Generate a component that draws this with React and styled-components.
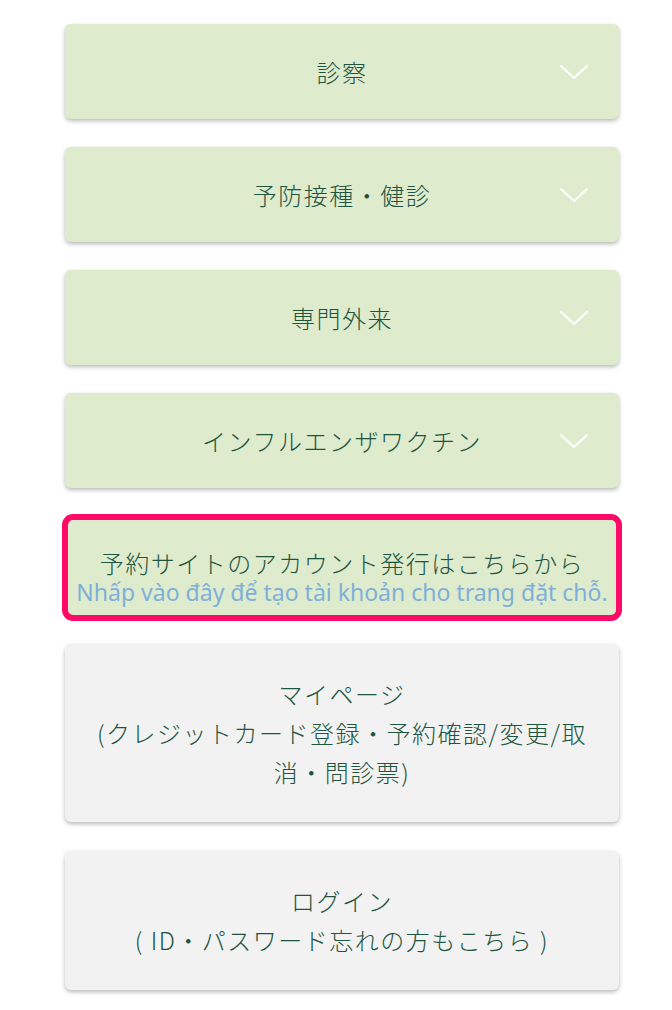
import React from 'react';
import styled, { createGlobalStyle } from 'styled-components';

const GlobalStyle = createGlobalStyle`
  html, body {
    margin: 0;
    padding: 0;
    background: #fff;
  }
  body {
    font-family: 'Noto Sans', 'Noto Sans CJK JP', sans-serif;
  }
`;

const MenuList = styled.div`
  width: 554px;
  padding: 24px 0 20px 65px;
  display: flex;
  flex-direction: column;
`;

const Card = styled.div`
  position: relative;
  box-sizing: border-box;
  background: ${p => (p.$gray ? '#f2f2f2' : '#deebcd')};
  border-radius: 6px;
  box-shadow: 0 2px 4px rgba(0, 0, 0, 0.28);
  padding: ${p => p.$padTop || 28}px 24px ${p => p.$padBottom || 28}px;
  margin-bottom: ${p => p.$gap || 28}px;
  text-align: center;
  color: #1f5540;
  font-family: 'Noto Sans CJK JP', sans-serif;
  font-weight: 300;
  font-size: 24px;
  letter-spacing: 1.5px;
  line-height: 39px;
`;

const AccountCard = styled.div`
  box-sizing: border-box;
  margin: -2px -3px 23px -3px;
  background: #deebcd;
  border: 6px solid #ff0a66;
  border-radius: 11px;
  padding: 28px 0 9px;
  text-align: center;
`;

const AccountTitle = styled.div`
  color: #1f5540;
  font-family: 'Noto Sans CJK JP', sans-serif;
  font-weight: 300;
  font-size: 24px;
  letter-spacing: 1.5px;
  line-height: 30px;
`;

const AccountSub = styled.div`
  color: #7eb0d9;
  font-family: 'Noto Sans', sans-serif;
  font-size: 23px;
  line-height: 28px;
  white-space: nowrap;
`;

const Chevron = styled.svg`
  position: absolute;
  right: 30px;
  top: 50%;
  margin-top: -9px;
  width: 30px;
  height: 18px;
`;

const ChevronIcon = () => (
  <Chevron viewBox="0 0 30 18">
    <polyline points="2,3 15,15 28,3" fill="none" stroke="#ffffff" strokeWidth="2" strokeLinecap="round" strokeLinejoin="round" />
  </Chevron>
);

const accordions = ['診察', '予防接種・健診', '専門外来', 'インフルエンザワクチン'];

export default function App() {
  return (
    <>
      <GlobalStyle />
      <MenuList>
        {accordions.map(label => (
          <Card key={label}>
            {label}
            <ChevronIcon />
          </Card>
        ))}
        <AccountCard>
          <AccountTitle>予約サイトのアカウント発行はこちらから</AccountTitle>
          <AccountSub>Nhấp vào đây để tạo tài khoản cho trang đặt chỗ.</AccountSub>
        </AccountCard>
        <Card $gray $gap={29} $padTop={30} $padBottom={31}>
          マイページ
          <br />
          (クレジットカード登録・予約確認/変更/取消・問診票)
        </Card>
        <Card $gray $padTop={30} $padBottom={31}>
          ログイン
          <br />( ID・パスワード忘れの方もこちら )
        </Card>
      </MenuList>
    </>
  );
}
